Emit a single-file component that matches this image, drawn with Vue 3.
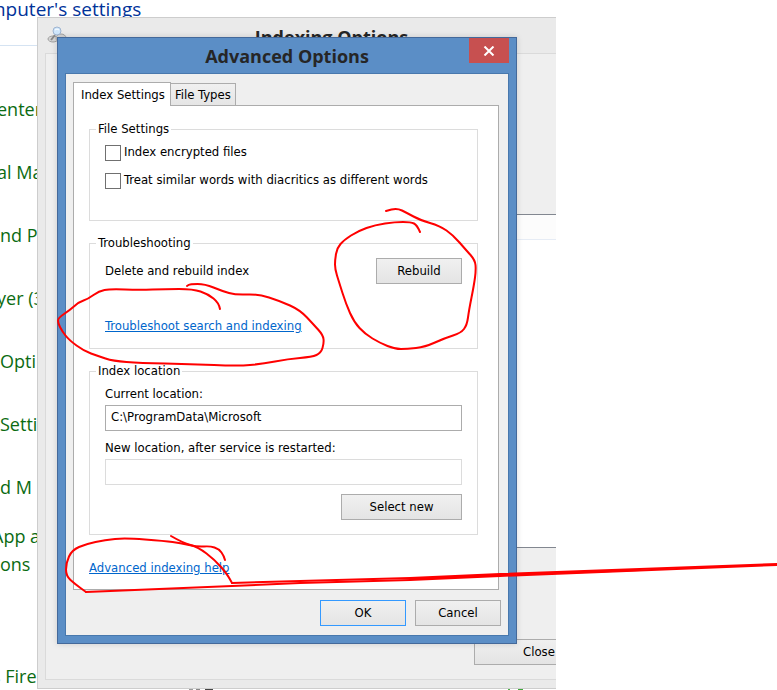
<template>
  <div class="desktop">
    <aside class="page">
      <h1 class="page-title">mputer's settings</h1>
      <ul class="links">
        <li v-for="(item, i) in links" :key="i">
          <a v-if="item.text" href="#" :class="item.edge">{{ item.text }}</a>
        </li>
      </ul>
    </aside>

    <section class="window">
      <header class="window-title">
        <svg class="window-icon" width="20" height="18" viewBox="0 0 20 18">
          <ellipse cx="6" cy="13" rx="5" ry="3" fill="#d5d5d5" stroke="#a0a0a0" />
          <ellipse cx="14" cy="12" rx="5" ry="4" fill="#d5d5d5" stroke="#a0a0a0" />
          <path d="M8 9L4 14" stroke="#888" stroke-width="2" />
          <circle cx="10" cy="5" r="4" fill="#cfe6fb" stroke="#9fb4d0" />
          <path d="M8 4q2-2 4 0" stroke="#fff" fill="none" />
        </svg>
        <h2>Indexing Options</h2>
      </header>
      <div class="window-body">
        <div class="list">
          <div class="list-head"></div>
        </div>
        <div class="window-foot">
          <button type="button" class="btn close-btn">Close</button>
        </div>
      </div>
    </section>

    <section class="dialog" role="dialog" aria-labelledby="dialog-title">
      <header class="dialog-title">
        <h2 id="dialog-title">Advanced Options</h2>
        <button type="button" class="close" aria-label="Close">
          <svg width="12" height="10" viewBox="0 0 12 10">
            <path d="M1.5 0.5L10.5 9.5M10.5 0.5L1.5 9.5" stroke="#fff" stroke-width="2" />
          </svg>
        </button>
      </header>

      <div class="client">
        <div class="tabs" role="tablist">
          <button
            v-for="name in tabs"
            :key="name"
            type="button"
            role="tab"
            class="tab"
            :class="{ active: tab === name }"
            :aria-selected="tab === name"
            @click="tab = name"
          >{{ name }}</button>
        </div>

        <div class="panel">
          <fieldset class="files">
            <legend>File Settings</legend>
            <label class="check"><input v-model="encrypted" type="checkbox">Index encrypted files</label>
            <label class="check"><input v-model="diacritics" type="checkbox">Treat similar words with diacritics as different words</label>
          </fieldset>

          <fieldset class="trouble">
            <legend>Troubleshooting</legend>
            <div class="row">
              <span>Delete and rebuild index</span>
              <button type="button" class="btn">Rebuild</button>
            </div>
            <a href="#" class="link">Troubleshoot search and indexing</a>
          </fieldset>

          <fieldset class="location">
            <legend>Index location</legend>
            <label for="current">Current location:</label>
            <input id="current" v-model="current" type="text" class="field dark" readonly>
            <label for="next">New location, after service is restarted:</label>
            <input id="next" v-model="next" type="text" class="field" readonly>
            <button type="button" class="btn wide">Select new</button>
          </fieldset>

          <a href="#" class="link help">Advanced indexing help</a>
        </div>

        <footer class="buttons">
          <button type="button" class="btn primary">OK</button>
          <button type="button" class="btn">Cancel</button>
        </footer>
      </div>
    </section>

    <svg class="ink" aria-hidden="true">
      <path v-for="(s, i) in strokes" :key="i" :d="smooth(s)" />
      <path d="M232 583L300 581L410 578L500 574L777 564" />
      <path d="M86 592L232 586L300 583L410 580L500 576L777 565" />
      <path d="M410 579L500 575L640 570" />
      <g class="specks">
        <rect x="189" y="689" width="4" height="1" fill="#999" />
        <rect x="196" y="689" width="4" height="1" fill="#888" />
        <rect x="205" y="689" width="8" height="1" fill="#444" />
        <rect x="508" y="689" width="2" height="1" fill="#4fae4a" />
        <rect x="518" y="689" width="5" height="1" fill="#3fa53a" />
      </g>
    </svg>
  </div>
</template>

<script setup>
import { ref } from 'vue'

const tabs = ['Index Settings', 'File Types']
const tab = ref('Index Settings')
const encrypted = ref(false)
const diacritics = ref(false)
const current = ref('C:\\ProgramData\\Microsoft')
const next = ref('')

const links = [
  { text: 'enter', edge: 'tuck' },
  { text: 'al Ma', edge: 'tuck' },
  { text: 'nd P' },
  { text: 'yer (3', edge: 'tuck' },
  { text: 'Opti' },
  { text: 'Setti' },
  { text: 'd M' },
  { text: 'App a\nons', edge: 'cut' },
  { text: '' },
  { text: 's Fire', edge: 'cut' }
]

// pen strokes, x and y of each point
const strokes = [
  [[220, 309], [219, 303], [208, 294], [193, 289], [165, 289], [140, 290], [110, 289], [99, 291], [88, 299], [79, 302], [70, 310], [58, 318], [58, 323], [62, 331], [69, 340], [84, 351], [98, 356], [113, 361], [140, 363], [190, 364], [238, 366], [262, 364], [288, 359], [312, 357], [321, 353], [324, 343], [323, 335], [314, 325], [300, 310], [280, 301], [258, 294], [236, 295], [222, 291], [205, 284], [190, 284], [187, 286]],
  [[420, 232], [417, 225], [411, 222], [395, 222], [375, 225], [358, 231], [344, 240], [337, 248], [335, 260], [335, 269], [339, 282], [346, 304], [354, 322], [365, 334], [380, 343], [395, 349], [407, 349], [425, 347], [445, 338], [461, 333], [467, 325], [469, 310], [474, 285], [476, 270], [475, 260], [466, 250], [453, 235], [440, 226], [420, 220], [407, 213], [397, 208], [386, 211]],
  [[225, 560], [224, 556], [219, 549], [210, 546], [198, 547], [180, 543], [165, 541], [125, 538], [105, 540], [86, 544], [72, 550], [66, 563], [66, 576], [75, 584], [86, 592]],
  [[171, 536], [183, 543], [198, 547], [215, 560], [227, 574], [232, 583]]
]

// curve through the middle of each pair of points
function smooth(pts) {
  let d = `M${pts[0].join(' ')}`
  for (let i = 1; i < pts.length - 1; i++) {
    const [x, y] = pts[i]
    const [nx, ny] = pts[i + 1]
    d += `Q${x} ${y} ${(x + nx) / 2} ${(y + ny) / 2}`
  }
  return d + `L${pts[pts.length - 1].join(' ')}`
}
</script>

<style>
body {
  margin: 0;
  background: #fff;
}
</style>

<style scoped>
* {
  box-sizing: border-box;
}
.desktop {
  position: relative;
  height: 100vh;
  overflow: hidden;
  font-family: "DejaVu Sans Condensed", "DejaVu Sans", sans-serif;
  font-size: 13px;
  line-height: 18px;
  color: #000;
}
h1,
h2 {
  margin: 0;
}
button,
input {
  font: inherit;
  color: inherit;
}

/* page behind the windows */
.page {
  width: 152px;
  font-family: "Open Sans", "Noto Sans", sans-serif;
  font-size: 18px;
  line-height: 28px;
  white-space: pre;
}
.page-title {
  height: 46px;
  margin-left: -12px;
  font-size: 19px;
  line-height: 18px;
  font-weight: 400;
  color: #003399;
  border-bottom: 1px solid #d5e3f2;
}
.links {
  list-style: none;
  margin: 0;
  padding: 31px 0 0;
}
.links li {
  display: flex;
  align-items: center;
  height: 63px;
}
.links a {
  color: #0b6b12;
  text-decoration: none;
}
.links .tuck {
  text-indent: -3px;
}
.links .cut {
  text-indent: -8px;
}

/* back window */
.window {
  position: absolute;
  top: 17px;
  left: 37px;
  bottom: 1px;
  width: 519px;
  display: flex;
  flex-direction: column;
  padding: 0 0 8px 7px;
  background: #eaeaea;
  border: 1px solid #cdcdcd;
  border-right: none;
}
.window-title {
  display: flex;
  align-items: flex-start;
  height: 35px;
  padding: 8px 0 0 2px;
}
.window-title h2 {
  flex: 1;
  padding-left: 40px;
  text-align: center;
}
.window-title h2,
.dialog-title h2 {
  font-family: "Open Sans", "Noto Sans", sans-serif;
  font-size: 18px;
  line-height: 22px;
  font-weight: 700;
  color: #262626;
}
.window-body {
  flex: 1;
  display: flex;
  flex-direction: column;
  padding-top: 160px;
  background: #efefef;
  border: 1px solid #dadada;
  border-right: none;
}
.list {
  flex: 1;
  margin-left: 15px;
  background: #fff;
  border: 1px solid #828790;
  border-width: 1px 0;
}
.list-head {
  height: 25px;
  background: #fcfcfc;
  border-bottom: 1px solid #e6ecf5;
}
.window-foot {
  display: flex;
  justify-content: flex-end;
  padding: 91px 0 14px;
}

/* front dialog */
.dialog {
  position: absolute;
  top: 37px;
  left: 57px;
  width: 460px;
  padding: 0 7px 7px;
  background: #5b8ec6;
  border: 1px solid #44699a;
  box-shadow: 0 0 6px rgba(0, 0, 0, 0.15);
}
.dialog-title {
  position: relative;
  height: 35px;
  padding-top: 7px;
  text-align: center;
}
.close {
  position: absolute;
  top: 0;
  right: 0;
  display: flex;
  align-items: center;
  justify-content: center;
  width: 40px;
  height: 25px;
  padding: 0;
  background: #c75050;
  border: none;
}
.client {
  padding: 8px 7px 9px;
  background: #efefef;
  border: 1px solid #4878ad;
}
.tabs {
  display: flex;
  align-items: flex-end;
}
.tab {
  height: 22px;
  padding: 0 4px;
  line-height: 20px;
  background: linear-gradient(#f0f0f0, #e5e5e5);
  border: 1px solid #acacac;
  border-left: none;
  border-bottom: none;
  white-space: nowrap;
}
.tab.active {
  position: relative;
  height: 24px;
  margin-bottom: -1px;
  padding: 0 5px 0 7px;
  background: #fff;
  border-left: 1px solid #acacac;
}
.panel {
  margin-right: 2px;
  padding: 14px 20px 12px 15px;
  background: #fff;
  border: 1px solid #acacac;
}
fieldset {
  min-width: 0;
  margin: 0 0 13px;
  padding: 0 15px;
  border: 1px solid #dcdcdc;
}
legend {
  margin-left: -9px;
  padding: 0 2px;
}
.files {
  padding-bottom: 26px;
}
.check {
  display: flex;
  align-items: center;
  gap: 3px;
  height: 28px;
}
.check input {
  appearance: none;
  width: 16px;
  height: 16px;
  margin: 2px 0 0;
  background: #fff;
  border: 1px solid #707070;
}
.check input:checked {
  background: #707070;
  box-shadow: inset 0 0 0 3px #fff;
}
.trouble {
  padding-top: 6px;
  padding-bottom: 13px;
}
.row {
  display: flex;
  align-items: center;
  justify-content: space-between;
  margin-bottom: 33px;
}
.link {
  display: block;
  color: #0066cc;
}
.location {
  display: flex;
  flex-direction: column;
  padding-top: 5px;
  padding-bottom: 14px;
}
.field {
  width: 100%;
  height: 26px;
  margin: 2px 0 8px;
  padding: 0 5px 3px;
  background: #fff;
  border: 1px solid #dcdcdc;
}
.field.dark {
  border-color: #acacac;
}
.btn {
  width: 86px;
  height: 26px;
  padding: 0;
  background: linear-gradient(#f0f0f0, #e4e4e4);
  border: 1px solid #acacac;
}
.btn:hover {
  border-color: #7eb4ea;
}
.btn.wide {
  align-self: flex-end;
  width: 121px;
  margin-top: 1px;
}
.btn.primary {
  border-color: #3399ff;
}
.close-btn {
  width: 82px;
  padding-left: 48px;
  text-align: left;
  border-right: none;
}
.help {
  margin-top: 24px;
}
.buttons {
  display: flex;
  justify-content: flex-end;
  gap: 9px;
  margin-top: 10px;
}

/* red pen */
.ink {
  position: absolute;
  inset: 0;
  width: 100%;
  height: 100%;
  pointer-events: none;
}
.ink path {
  fill: none;
  stroke: #f00;
  stroke-width: 2;
  stroke-linecap: round;
  stroke-linejoin: round;
}
</style>
